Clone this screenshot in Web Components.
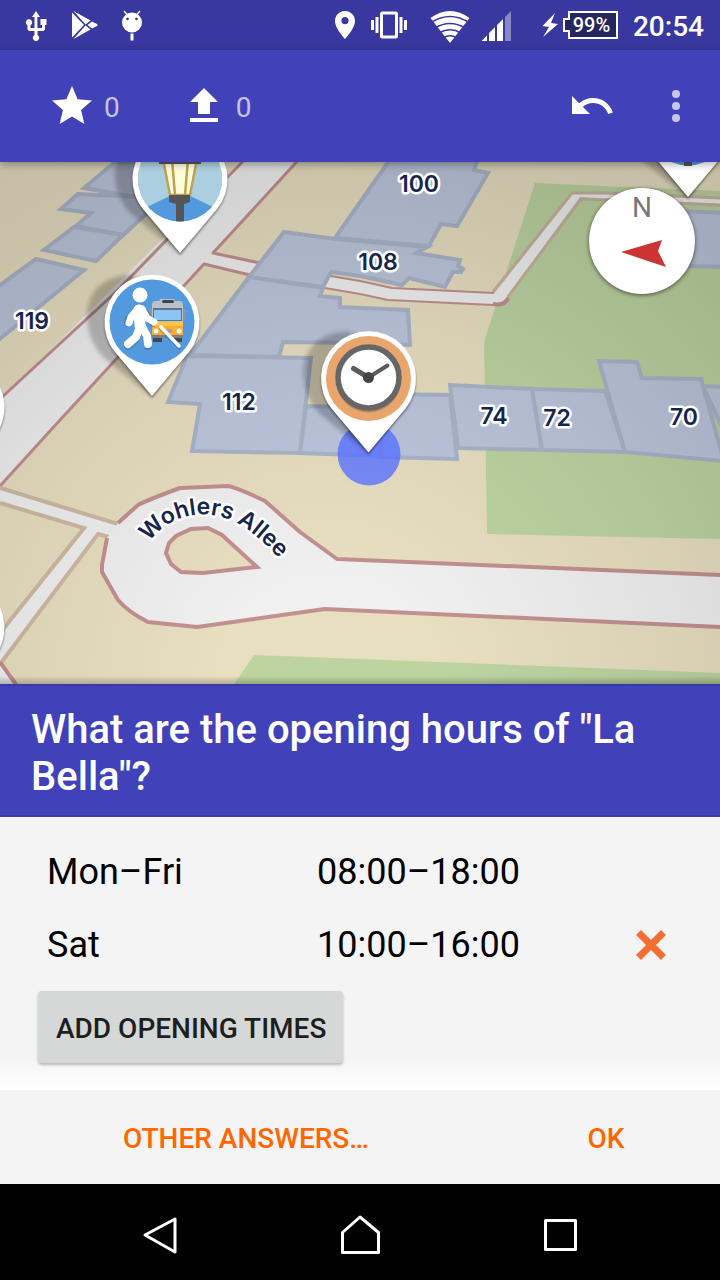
<!DOCTYPE html>
<html lang="en">
<head>
<meta charset="utf-8">
<meta name="viewport" content="width=device-width, initial-scale=1">
<title>StreetComplete</title>
<style>
  body { margin: 0; font-family: Roboto, "Noto Sans", sans-serif; background: #000; }
</style>
</head>
<body>
<quest-app></quest-app>

<template id="t-app">
  <style>
    :host { display: flex; flex-direction: column; min-height: 100vh; }
    street-map { flex: 1; }
  </style>
  <status-bar time="20:54"></status-bar>
  <app-toolbar></app-toolbar>
  <street-map></street-map>
  <quest-form>
    <span slot="question">What are the opening hours of "La Bella"?</span>
    <opening-row day="Mon–Fri" hours="08:00–18:00"></opening-row>
    <opening-row day="Sat" hours="10:00–16:00" removable></opening-row>
  </quest-form>
  <nav-bar></nav-bar>
</template>

<template id="t-status">
  <style>
    :host { display: flex; justify-content: space-between; height: 50px; background: #3838a0; color: #fff; }
    div { display: flex; align-items: center; }
    .left { padding-left: 20px; gap: 12px; }
    .right { padding-right: 16px; }
    svg { display: block; fill: #fff; }
    .battery { display: grid; width: 57px; margin-right: 15px; }
    .battery > * { grid-area: 1 / 1; }
    .battery span { font-size: 20px; line-height: 50px; font-weight: 500; text-align: center; padding-left: 4px; }
    time { font-size: 28px; line-height: 50px; font-weight: 500; padding-top: 4px; }
  </style>
  <div class="left">
    <svg width="36" height="50" viewBox="20 0 36 50"><path d="M36 11l4 6h-2.600v11H42v-3h-1.500v-6H46.500v6H45v4.500l-1.500 1.500h-6v4a3.200 3.200 0 1 1-3 0v-4h-5.500L27.500 29.500V25.300a3.200 3.200 0 1 1 3 0V28h4V17H32z"/></svg>
    <svg width="36" height="50" viewBox="68 0 36 50"><path d="M72 12.500l12 12.500-12 12.500zM73.500 11l17 9.500-5 4zM73.500 39l17-9.500-5-4zM92 21.500l5 2.500q1.500 1 0 2l-5 2.500-4.500-3.500z"/></svg>
    <svg width="36" height="50" viewBox="116 0 36 50"><path fill-rule="evenodd" d="M132 12.500a10 10 0 1 1 0 20 10 10 0 0 1 0-20zM127.500 17.500a1.400 1.400 0 1 0 .01 0zM136.500 17.500a1.400 1.400 0 1 0 .01 0zM130.500 33.500h3v7h-3z"/><path d="M124 11l3.500 4M140 11l-3.500 4" stroke="#fff" stroke-width="1.500"/></svg>
  </div>
  <div class="right">
    <svg width="38" height="50" viewBox="326 0 38 50"><path fill-rule="evenodd" d="M345 11c-5.600 0-10 4.400-10 10 0 7.500 10 18 10 18s10-10.500 10-18c0-5.600-4.400-10-10-10zm0 6a3.600 3.600 0 1 1 0 7.200 3.600 3.600 0 0 1 0-7.200z"/></svg>
    <svg width="54" height="50" viewBox="364 0 54 50"><rect x="381.500" y="13" width="15" height="24" rx="1" fill="none" stroke="#fff" stroke-width="3"/><path d="M371 20h3v10h-3zM375.500 17h3v16h-3zM399.500 17h3v16h-3zM404 20h3v10h-3z"/></svg>
    <svg width="58" height="50" viewBox="418 0 58 50"><path d="M430.500 18q19.500-14 39 0L450 43z"/><g fill="none" stroke="#3838a0" stroke-width="1.600"><path d="M431 22.500q19-12 38 0M435 28q15-9 30 0M439 33q11-6.500 22 0M443 38q7-4.500 14 0"/></g></svg>
    <svg width="50" height="50" viewBox="476 0 50 50"><path d="M481.500 41l5.500-5.500V41zM489 41v-8l6-6v14zM497 41V25l6-6v22z"/><path opacity=".4" d="M505 41V17l6-6v30z"/></svg>
    <svg width="35" height="50" viewBox="526 0 35 50"><path d="M555 13l-12.500 13 6.500 1-6 10 15-13-7-1z"/></svg>
    <div class="battery">
      <svg width="57" height="50" viewBox="561 0 57 50"><path d="M569 12h48v26h-48v-7h-5V19h5z" fill="#25255f" stroke="#fff" stroke-width="2"/></svg>
      <span>99%</span>
    </div>
    <time></time>
  </div>
</template>

<template id="t-toolbar">
  <style>
    :host { display: flex; align-items: center; height: 112px; background: #4141b9; padding: 0 20px 0 48px; position: relative; z-index: 1; box-shadow: 0 2px 8px rgba(0,0,0,.35); }
    button { display: flex; align-items: center; gap: 8px; padding: 0; border: 0; background: none; font: 400 28px/32px Roboto, sans-serif; color: rgba(255,255,255,.7); }
    span { padding-top: 4px; }
    .stars { margin-right: 60px; }
    .undo { margin-left: auto; margin-right: 36px; }
    svg { width: 48px; height: 48px; fill: #fff; display: block; }
    .more svg { opacity: .7; }
  </style>
  <button class="stars" aria-label="Solved quests"><svg viewBox="0 0 24 24"><path d="M12 17.270L18.180 21l-1.640-7.030L22 9.240l-7.190-.610L12 2 9.190 8.630 2 9.240l5.460 4.730L5.820 21z"/></svg><span>0</span></button>
  <button aria-label="Upload"><svg viewBox="0 0 24 24"><path d="M9 16h6v-6h4l-7-7-7 7h4zM5 18h14v2H5z"/></svg><span>0</span></button>
  <button class="undo" aria-label="Undo"><svg viewBox="0 0 24 24"><path d="M12.500 8c-2.650 0-5.050.990-6.900 2.600L2 7v9h9l-3.620-3.620c1.390-1.160 3.160-1.880 5.120-1.880 3.540 0 6.550 2.310 7.600 5.500l2.370-.780C21.080 11.030 17.150 8 12.500 8z"/></svg></button>
  <button class="more" aria-label="More options"><svg viewBox="0 0 24 24"><circle cx="12" cy="6" r="2"/><circle cx="12" cy="12" r="2"/><circle cx="12" cy="18" r="2"/></svg></button>
</template>

<template id="t-map">
  <style>
    :host { display: grid; position: relative; overflow: hidden; min-height: 522px; background: #d8cfb2; }
    .map { display: block; width: 100%; height: 100%; }
    .b { fill: #bdc6dd; stroke: #abb5c9; stroke-width: 4; }
    .red { fill: none; stroke: #c39090; stroke-width: 4; stroke-linejoin: round; }
    .thin { stroke-width: 3; }
    .brown { fill: none; stroke: #cfb9a3; stroke-width: 4; }
    .road { fill: #f0f0f0; }
    .grass { fill: #bdd4a1; }
    .label { font: 600 23px Inter, sans-serif; fill: #16254d; stroke: #fff; stroke-width: 5; stroke-linejoin: round; paint-order: stroke; text-anchor: middle; }
    .compass { position: absolute; top: 26px; right: 25px; width: 106px; height: 106px; padding: 0; border: 0; border-radius: 50%; background: #fff; box-shadow: 0 1px 4px rgba(0,0,0,.6); display: grid; justify-items: center; color: #777; font: 400 28px/32px Roboto, sans-serif; }
    .compass > * { grid-area: 1 / 1; }
    .compass span { padding-top: 4px; }
    .edge { position: absolute; left: 0; right: 0; bottom: 0; height: 8px; background: linear-gradient(transparent, rgba(0,0,0,.22)); }
  </style>
  <svg class="map" viewBox="0 162 720 522" preserveAspectRatio="xMidYMid slice">
    <defs>
      <radialGradient id="light" gradientUnits="userSpaceOnUse" cx="330" cy="690" r="720">
        <stop offset="0" stop-opacity="0"/><stop offset=".15" stop-opacity="0"/><stop offset=".5" stop-opacity=".065"/><stop offset=".76" stop-opacity=".135"/><stop offset="1" stop-opacity=".16"/>
      </radialGradient>
      <filter id="soft" x="-20%" y="-20%" width="140%" height="140%"><feGaussianBlur stdDeviation="2"/></filter>
      <filter id="soft1" x="-20%" y="-20%" width="140%" height="140%"><feGaussianBlur stdDeviation="1.200"/></filter>
      <g id="pin">
        <path d="M0 75L-50 34C-76 4-70-47-20-47L20-30L30 30z" fill="#000" opacity=".22" filter="url(#soft)"/>
        <path d="M0 76L-38 31A47.500 47.500 0 1 1 38 31z" fill="#000" opacity=".4" filter="url(#soft1)"/>
        <path d="M0 74L-37 30A47.500 47.500 0 1 1 37 30z" fill="#fff"/>
      </g>
      <clipPath id="disc"><circle r="42.500"/></clipPath>
      <path id="arc" d="M149 542C171 513 204 509 230 520C252 529 266 545 292 571"/>
    </defs>

    <rect y="100" width="720" height="640" fill="#e8dfc1"/>
    <path class="grass" d="M535 183L720 191V539L487 534L484 342L507 270z"/>
    <path class="grass" d="M254 655L360 659L720 673V690H230z"/>

    <path class="road" d="M247 155H304L213 253L260 263L248 275L204 264L0 486V400z"/>
    <path class="red thin" d="M249 155L118 290L0 399M303 155L213 253L260 263M250 275L204 264L60 420L0 486"/>
    <path class="road" d="M0 488L120 524L110 537L98 535L0 665V630L84 528L0 502z"/>
    <path class="brown" d="M0 488L118 524M0 503L84 528L0 633M109 537L98 534L0 664"/>
    <path class="road" d="M0 664L17 690H0z"/>
    <path class="red" d="M0 662L20 690"/>

    <path class="road" d="M118 523L138 505L180 487L228 485L265 500L300 531L337 558L720 575V627L325 609L197 627L148 622L118 600L101 568L107 538z"/>
    <path class="red" d="M118 523L138 505Q150 499 180 488L228 486Q238 488 265 501L300 532L337 559L722 575M722 627L325 609L197 627L148 622Q128 612 118 600L102 572V565L107 538"/>
    <path d="M166 553L169 543L176 536L191 529L208 528L222 535L257 567L203 573L181 572L171 564z" class="red" style="fill:#e8dfc1;stroke-linejoin:miter"/>

    <path class="road" d="M494 294L573 193L722 199V204L580 197L506 298z"/>
    <path class="brown" style="stroke-width:3;stroke:#c8b3a0" d="M493 292L572 193H610L722 198M507 298L581 199L722 205"/>
    <path class="road" d="M325 276L360 282L392 288L496 293L507 296L505 303L496 305L388 299L325 288z"/>
    <path class="red thin" style="stroke-width:2" d="M325 275L360 281L392 288L494 293M325 288L360 294L388 300L493 305"/>
    <path class="red" d="M493 304Q505 306 508 298"/>

    <g class="b">
      <path d="M115 162L84 188L140 198L165 162z"/>
      <path d="M78 194L61 209L91 213L76 226L123 235L146 214L160 198z"/>
      <path d="M74 227L44 250L96 261L123 235z"/>
      <path d="M36 259L84 270L-4 342V288z"/>
      <path d="M391 158L335 238L429 246L441 224L457 226L488 173L474 170L478 158z"/>
      <path d="M249 277L284 232L335 239L427 247L416 253L460 260L458 266L463 269L461 272L453 272L445 287L409 278L402 285L360 276L331 272L323 287z"/>
      <path d="M190 355L249 277L323 288L320 296L340 298V307L408 310L410 345L360 343L283 342L279 357z"/>
      <path d="M187 356L311 358L300 453L192 451L200 404L168 402z"/>
      <path d="M306 406L415 409L412 457L300 453z"/>
      <path d="M382 394L450 395L457 459L380 457z"/>
      <path d="M450 385L532 389L542 450L458 448z"/>
      <path d="M532 389L605 391L625 452L542 450z"/>
      <path d="M599 361L637 362L642 378L701 379L724 461L625 452z"/>
      <path d="M703 386L728 387V440z"/>
      <path d="M680 211L726 213V267L684 266z"/>
    </g>
    <rect y="100" width="720" height="640" fill="url(#light)"/>

    <circle cx="369" cy="454" r="31.500" fill="#5870ff" opacity=".8"/>

    <text class="label" x="419" y="192">100</text>
    <text class="label" x="378" y="270">108</text>
    <text class="label" x="32" y="329">119</text>
    <text class="label" x="239" y="410">112</text>
    <text class="label" x="494" y="424">74</text>
    <text class="label" x="557" y="426">72</text>
    <text class="label" x="684" y="425">70</text>
    <text class="label" style="text-anchor:start"><textPath href="#arc">Wohlers Allee</textPath></text>

    <use href="#pin" x="-43" y="407"/>
    <use href="#pin" x="-43" y="627"/>

    <g transform="translate(688 123)">
      <use href="#pin"/>
      <circle r="42.500" fill="#529add"/><path d="M-4 10H4V43H-4z" fill="#505050"/>
    </g>

    <g transform="translate(180 179)">
      <use href="#pin"/>
      <g clip-path="url(#disc)">
        <circle r="42.500" fill="#accfdf"/>
        <path d="M0 12L50 36V50H-50V36z" fill="#529add"/>
        <path d="M-17-20H17L10 16H-10z" fill="#fffddc" stroke="#c0a14d" stroke-width="2.500"/>
        <path d="M-8-20L-5 16M8-20L5 16" stroke="#c0a14d" stroke-width="2.500"/>
        <path d="M-21-20H21V-15H-21zM-11 16H10V23L4 25V43H-4V25L-11 23z" fill="#555"/>
      </g>
    </g>

    <g transform="translate(152 322)">
      <use href="#pin"/>
      <circle r="42.500" fill="#529add"/>
      <path d="M8-23h14l1 3H7z" fill="#b9c2c9"/>
      <path d="M0-17q0-4 4-4H27q4 0 4 4V1H0z" fill="#b9c2c9"/>
      <path d="M31-13h3v11h-3zM-3-13H0V-2h-3z" fill="#8c969d"/>
      <rect x="10" y="-22" width="12" height="3" rx="1.500" fill="#444"/>
      <path d="M1-14H30V-1H1z" fill="#66727c"/>
      <path d="M2-12H29V-2H2z" fill="#89c5f6"/>
      <path d="M0 0H31V13H0z" fill="#ffab30"/><path d="M0 0H31V4H0z" fill="#ffc64a"/>
      <path d="M0 13H31V16H0z" fill="#77818a"/>
      <path d="M1 16H10V20H1zM22 16H30V20H22z" fill="#464646"/>
      <path d="M11 7H20V11H11z" fill="#a6a498"/>
      <circle cx="4" cy="9" r="2.500" fill="#fff"/><circle cx="27" cy="9" r="2.500" fill="#fff"/>
      <g stroke-linecap="round" stroke-linejoin="round" fill="none" transform="translate(0 1)" stroke="#2d638f" opacity=".4">
        <path d="M9 6L27 25" stroke-width="3.500"/><path d="M-14-11L-23-4L-24 0M-8-11L1 0" stroke-width="8"/><path d="M-12 6L-17 17L-24 23M-10 6L-5 15L-4 23" stroke-width="8"/>
      </g>
      <g stroke="#fff" stroke-linecap="round" stroke-linejoin="round" fill="none">
        <path d="M9 5L27 24" stroke-width="3.500"/>
        <path d="M-15-12L-21-5L-23 1M-10-13L-5-4L2 0" stroke-width="7"/>
        <path d="M-12 5L-16 15L-24 22M-10 5L-5 14L-4 22" stroke-width="8"/>
        <path d="M-13-12L-12 4" stroke-width="11"/>
      </g>
      <circle cx="-12" cy="-27" r="7.500" fill="#fff"/>
    </g>

    <g transform="translate(368.500 378.500)">
      <use href="#pin"/>
      <circle r="42.500" fill="#e9a56e"/>
      <circle cy="1.500" r="32.500" fill="#a8794f" opacity=".7"/>
      <circle cy="-1" r="30.500" fill="#fff" stroke="#666" stroke-width="5.500"/>
      <path d="M-15-10L0-1" stroke="#5c5c5c" stroke-width="5" stroke-linecap="round"/>
      <path d="M19-13L0-1" stroke="#5c5c5c" stroke-width="4" stroke-linecap="round"/>
      <circle cy="-1" r="5.500" fill="#444"/>
    </g>
  </svg>
  <button class="compass" aria-label="Compass">
    <svg width="106" height="106" viewBox="589 188 106 106"><path d="M621 252L662 240L658 251L666 267z" fill="#cc3333"/></svg>
    <span>N</span>
  </button>
  <div class="edge"></div>
</template>

<template id="t-form">
  <style>
    :host { display: block; background: #f4f4f4; color: #000; }
    h1 { margin: 0; padding: 20px 31px 15px; border: solid #3a3aa6; border-width: 2px 0; background: #4141b9; color: #fff; font-size: 40px; line-height: 47px; font-weight: 500; }
    .body { padding: 18px 38px 27px; background: linear-gradient(#f4f4f4 calc(100% - 34px), #fff); }
    button { font: 500 28px/32px Roboto, sans-serif; text-transform: uppercase; border: 0; }
    .add { margin-top: 10px; height: 72px; padding: 3px 17px 0 18px; border-radius: 4px; background: #d6d8d7; color: #1e1e1e; box-shadow: 0 2px 3px rgba(0,0,0,.25); display: block; }
    .actions { display: grid; grid-template-columns: 41fr 19fr; }
    .actions button { height: 94px; padding: 3px 16px 0; background: none; color: #ff6600; }
  </style>
  <h1><slot name="question"></slot></h1>
  <div class="body">
    <slot></slot>
    <button class="add">Add opening times</button>
  </div>
  <div class="actions"><button>Other answers…</button><button>OK</button></div>
</template>

<template id="t-row">
  <style>
    :host { display: grid; grid-template-columns: 270px 1fr auto; align-items: center; height: 73px; padding-left: 9px; font-size: 36px; line-height: 42px; }
    button { display: block; padding: 0; border: 0; background: none; width: 62px; height: 62px; }
    svg { display: block; width: 100%; height: 100%; }
    button[hidden] { display: none; }
  </style>
  <span class="day"></span><span class="hours"></span>
  <button aria-label="Remove"><svg viewBox="0 0 62 62"><path d="M21 21L41 41M41 21L21 41" stroke="#f26f31" stroke-width="7" stroke-linecap="square"/></svg></button>
</template>

<template id="t-nav">
  <style>
    :host { display: flex; justify-content: space-around; align-items: center; height: 96px; padding: 0 60px; background: #000; }
    button { padding: 0; border: 0; background: none; }
    svg { display: block; width: 96px; height: 96px; fill: none; stroke: #fff; stroke-width: 3; stroke-linejoin: round; }
  </style>
  <button aria-label="Back"><svg viewBox="0 0 96 96"><path d="M63 35V68L33 51z"/></svg></button>
  <button aria-label="Home"><svg viewBox="0 0 96 96"><path d="M30.500 68.500V48.500L48 33L66.500 48.500V68.500z"/></svg></button>
  <button aria-label="Recent apps"><svg viewBox="0 0 96 96"><rect x="33.500" y="36.500" width="30" height="29"/></svg></button>
</template>

<script>
  class TemplateElement extends HTMLElement {
    constructor() {
      super();
      this.attachShadow({ mode: "open" })
        .append(document.getElementById(this.constructor.template).content.cloneNode(true));
    }
    find(selector) { return this.shadowRoot.querySelector(selector); }
  }
  class StatusBar extends TemplateElement {
    static template = "t-status";
    connectedCallback() { this.find("time").textContent = this.getAttribute("time"); }
  }
  class AppToolbar extends TemplateElement { static template = "t-toolbar"; }
  class StreetMap extends TemplateElement { static template = "t-map"; }
  class OpeningRow extends TemplateElement {
    static template = "t-row";
    connectedCallback() {
      this.find(".day").textContent = this.getAttribute("day");
      this.find(".hours").textContent = this.getAttribute("hours");
      this.find("button").hidden = !this.hasAttribute("removable");
    }
  }
  class QuestForm extends TemplateElement { static template = "t-form"; }
  class NavBar extends TemplateElement { static template = "t-nav"; }
  class QuestApp extends TemplateElement { static template = "t-app"; }

  customElements.define("status-bar", StatusBar);
  customElements.define("app-toolbar", AppToolbar);
  customElements.define("street-map", StreetMap);
  customElements.define("opening-row", OpeningRow);
  customElements.define("quest-form", QuestForm);
  customElements.define("nav-bar", NavBar);
  customElements.define("quest-app", QuestApp);
</script>
</body>
</html>
